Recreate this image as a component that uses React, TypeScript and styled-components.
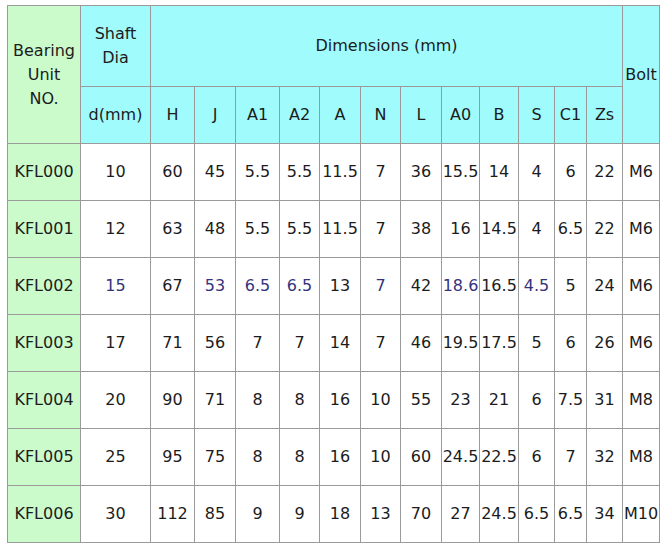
import React from "react";
import styled, { createGlobalStyle } from "styled-components";

const Global = createGlobalStyle`
  html, body { margin: 0; padding: 0; background: #ffffff; }
  body { font-family: "DejaVu Sans", Verdana, sans-serif; }
`;

const Page = styled.div`
  padding: 5px 0 0 7px;
`;

const Table = styled.table`
  border-collapse: collapse;
  table-layout: fixed;
  width: 653px;
  font-family: "DejaVu Sans", Verdana, sans-serif;
  font-size: 16px;
  color: #1c1c1c;
`;

const Col = styled.col<{ $w: number }>`
  width: ${(p) => p.$w}px;
`;

const Cell = styled.td<{ $bg?: string; $tone?: string }>`
  border: 1px solid #9a9a9a;
  padding: 0;
  text-align: center;
  vertical-align: middle;
  line-height: 24px;
  white-space: nowrap;
  background: ${(p) => p.$bg ?? "#ffffff"};
  color: ${(p) => p.$tone ?? "#1c1c1c"};
`;

const HeadCell = styled.th<{ $bg: string }>`
  border: 1px solid #9a9a9a;
  padding: 0;
  text-align: center;
  vertical-align: middle;
  line-height: 24px;
  white-space: nowrap;
  font-weight: normal;
  color: #1c1c1c;
  background: ${(p) => p.$bg};
`;

const HeadRow = styled.tr<{ $h: number }>`
  height: ${(p) => p.$h}px;
`;

const BodyRow = styled.tr`
  height: 57px;
`;

const GREEN = "#cbfacb";
const CYAN = "#a0fbfc";
const NAVY = "#34347e";

const widths = [73, 70, 44, 41, 44, 40, 41, 40, 41, 38, 39, 36, 32, 36, 37];
const subHeads = ["H", "J", "A1", "A2", "A", "N", "L", "A0", "B", "S", "C1", "Zs"];

const rows: string[][] = [
  ["KFL000", "10", "60", "45", "5.5", "5.5", "11.5", "7", "36", "15.5", "14", "4", "6", "22", "M6"],
  ["KFL001", "12", "63", "48", "5.5", "5.5", "11.5", "7", "38", "16", "14.5", "4", "6.5", "22", "M6"],
  ["KFL002", "15", "67", "53", "6.5", "6.5", "13", "7", "42", "18.6", "16.5", "4.5", "5", "24", "M6"],
  ["KFL003", "17", "71", "56", "7", "7", "14", "7", "46", "19.5", "17.5", "5", "6", "26", "M6"],
  ["KFL004", "20", "90", "71", "8", "8", "16", "10", "55", "23", "21", "6", "7.5", "31", "M8"],
  ["KFL005", "25", "95", "75", "8", "8", "16", "10", "60", "24.5", "22.5", "6", "7", "32", "M8"],
  ["KFL006", "30", "112", "85", "9", "9", "18", "13", "70", "27", "24.5", "6.5", "6.5", "34", "M10"],
];

// cells tinted by the watermark in the third row
const tinted: Record<number, number[]> = { 2: [1, 3, 4, 5, 7, 9, 11] };

export default function App() {
  return (
    <Page>
      <Global />
      <Table>
        <colgroup>
          {widths.map((w, i) => (
            <Col key={i} $w={w} />
          ))}
        </colgroup>
        <thead>
          <HeadRow $h={81}>
            <HeadCell rowSpan={2} $bg={GREEN}>
              Bearing
              <br />
              Unit
              <br />
              NO.
            </HeadCell>
            <HeadCell $bg={CYAN}>
              Shaft
              <br />
              Dia
            </HeadCell>
            <HeadCell colSpan={12} $bg={CYAN}>
              Dimensions (mm)
            </HeadCell>
            <HeadCell rowSpan={2} $bg={CYAN}>
              Bolt
            </HeadCell>
          </HeadRow>
          <HeadRow $h={57}>
            <HeadCell $bg={CYAN}>d(mm)</HeadCell>
            {subHeads.map((h) => (
              <HeadCell key={h} $bg={CYAN}>
                {h}
              </HeadCell>
            ))}
          </HeadRow>
        </thead>
        <tbody>
          {rows.map((r, ri) => (
            <BodyRow key={r[0]}>
              {r.map((v, ci) => (
                <Cell
                  key={ci}
                  $bg={ci === 0 ? GREEN : "#ffffff"}
                  $tone={tinted[ri]?.includes(ci) ? NAVY : undefined}
                >
                  {v}
                </Cell>
              ))}
            </BodyRow>
          ))}
        </tbody>
      </Table>
    </Page>
  );
}
